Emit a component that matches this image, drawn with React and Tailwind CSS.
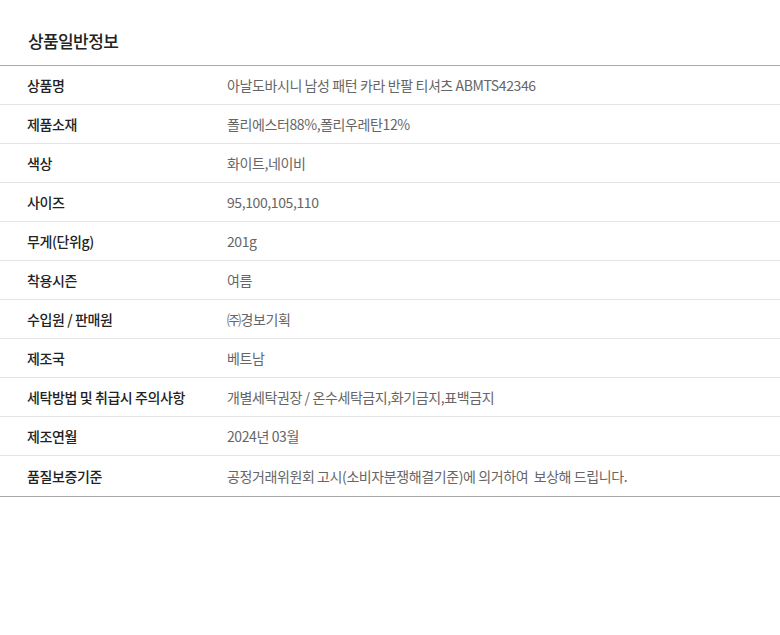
import React from "react";

const rows = [
  ["상품명", "아날도바시니 남성 패턴 카라 반팔 티셔츠 ABMTS42346"],
  ["제품소재", "폴리에스터88%,폴리우레탄12%"],
  ["색상", "화이트,네이비"],
  ["사이즈", "95,100,105,110"],
  ["무게(단위g)", "201g"],
  ["착용시즌", "여름"],
  ["수입원 / 판매원", "㈜경보기획"],
  ["제조국", "베트남"],
  ["세탁방법 및 취급시 주의사항", "개별세탁권장 / 온수세탁금지,화기금지,표백금지"],
  ["제조연월", "2024년 03월"],
  ["품질보증기준", "공정거래위원회 고시(소비자분쟁해결기준)에 의거하여  보상해 드립니다."],
];

export default function App() {
  return (
    <div
      className="w-[780px] h-[635px] bg-white"
      style={{ fontFamily: '"Noto Sans CJK KR", "Noto Sans", sans-serif' }}
    >
      <div className="h-[65px] flex items-center pl-[28px] pt-[16px]">
        <h2 className="text-[17px] font-medium text-[#222] tracking-[-0.6px]">상품일반정보</h2>
      </div>
      <div className="border-t border-b border-[#aaa]">
        {rows.map(([k, v], i) => (
          <div
            key={i}
            className={
              "flex items-center h-[39px] text-[14px] tracking-[-0.4px] " +
              (i < rows.length - 1 ? "border-b border-[#e4e4e4]" : "h-[40px]")
            }
          >
            <div className="w-[227px] pl-[27px] font-medium text-[#222]">{k}</div>
            <div className="text-[#666] whitespace-pre">{v}</div>
          </div>
        ))}
      </div>
    </div>
  );
}
